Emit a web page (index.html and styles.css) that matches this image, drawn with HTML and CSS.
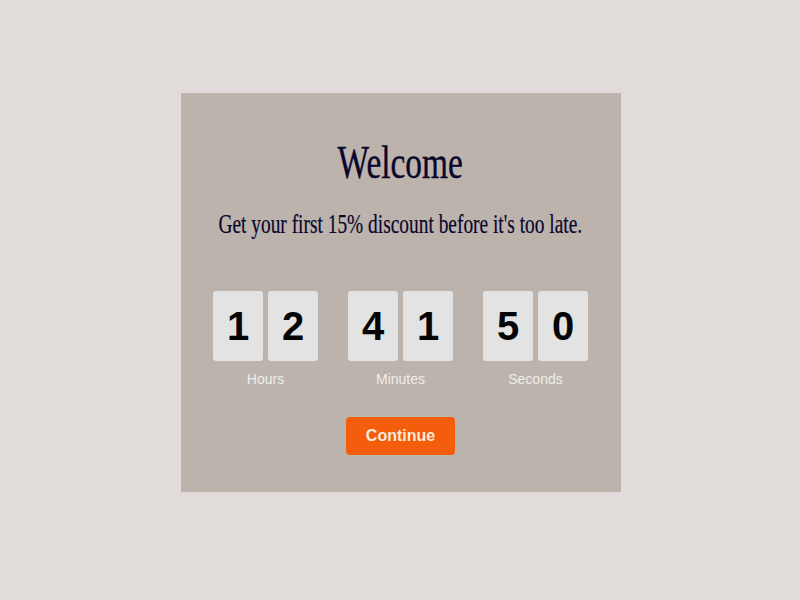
FILE: index.html
```html
<!DOCTYPE html>
<html lang="en">
  <head>
    <meta charset="UTF-8" />
    <title>Welcome</title>
    <link rel="stylesheet" href="styles.css">
  </head>
  <body>
    <main class="popup">
      <h1 class="title"><span>Welcome</span></h1>
      <p class="subtitle"><span>Get your first 15% discount before it's too late.</span></p>

      <!-- countdown -->
      <div class="timer">
        <div class="unit">
          <div class="digits">
            <span class="digit">1</span>
            <span class="digit">2</span>
          </div>
          <p class="label">Hours</p>
        </div>
        <div class="unit">
          <div class="digits">
            <span class="digit">4</span>
            <span class="digit">1</span>
          </div>
          <p class="label">Minutes</p>
        </div>
        <div class="unit">
          <div class="digits">
            <span class="digit">5</span>
            <span class="digit">0</span>
          </div>
          <p class="label">Seconds</p>
        </div>
      </div>

      <button class="btn" type="button">Continue</button>
    </main>
  </body>
</html>
```

FILE: styles.css
```css
* {
  box-sizing: border-box;
  margin: 0;
  padding: 0;
}
body {
  height: 100vh;
  padding-top: 93px;
  overflow: hidden;
  background-color: #e1dcd9;
  font-family: "Liberation Sans", Arial, sans-serif;
}
.popup {
  display: flex;
  flex-direction: column;
  align-items: center;
  width: 440px;
  height: 399px;
  margin-left: 180.5px;
  padding-top: 43px;
  background-color: #bcb3ac;
}
.title,
.subtitle {
  color: #09062c;
  font-family: "Liberation Serif", "Times New Roman", serif;
  font-weight: normal;
  white-space: nowrap;
}
.title {
  font-size: 47px;
  line-height: 52px;
  -webkit-text-stroke: 0.4px #09062c;
}
.subtitle {
  margin-top: 20px;
  font-size: 27px;
  line-height: 32px;
  -webkit-text-stroke: 0.2px #09062c;
}
/* condensed serif */
.title span {
  display: inline-block;
  transform: scaleX(0.71);
}
.subtitle span {
  display: inline-block;
  margin: 0 -80px;
  transform: scaleX(0.718);
}
.timer {
  display: flex;
  gap: 30px;
  margin-top: 51px;
}
.digits {
  display: flex;
  gap: 5px;
}
.digit {
  width: 50px;
  height: 70px;
  border-radius: 3px;
  background-color: #e3e3e3;
  color: #040504;
  font-size: 40px;
  font-weight: bold;
  line-height: 70px;
  text-align: center;
}
.label {
  margin-top: 10px;
  color: #f0edea;
  font-size: 14px;
  line-height: 16px;
  text-align: center;
}
.btn {
  width: 109px;
  height: 38px;
  margin-top: 30px;
  border: none;
  border-radius: 4px;
  background-color: #f35d0c;
  color: #fbe9dc;
  font-family: inherit;
  font-size: 16px;
  font-weight: bold;
}
```
